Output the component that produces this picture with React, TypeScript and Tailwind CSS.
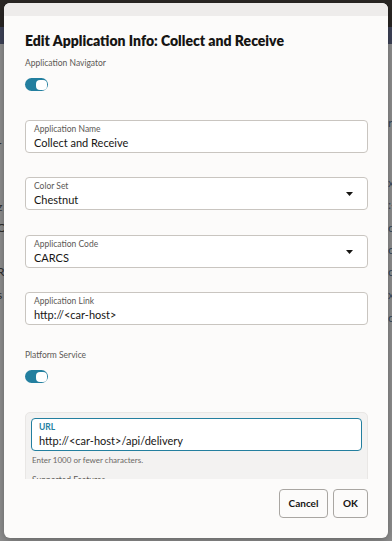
import React from "react";

const FONT = { fontFamily: "Lato, 'Noto Sans', sans-serif" };

function Toggle() {
  return (
    <div className="w-[23px] h-[13px] rounded-full bg-[#237f9f] flex items-center justify-end pr-[1.5px]">
      <div className="w-[11px] h-[10px] rounded-[4px] bg-white" />
    </div>
  );
}

function Caret() {
  return (
    <svg width="7" height="4" viewBox="0 0 7 4" className="shrink-0">
      <path d="M0 0 H7 L3.5 4 Z" fill="#161513" />
    </svg>
  );
}

function Field({ label, value, select }: { label: string; value: string; select?: boolean }) {
  return (
    <div className="h-[33px] rounded-[4px] border border-[#c9c5c0] bg-white flex items-center pl-[8px] pr-[14px]">
      <div className="flex-1 flex flex-col">
        <div className="text-[8.5px] leading-[12px] text-[#5b5855]">{label}</div>
        <div className="text-[11px] leading-[15px] text-[#161513]">{value}</div>
      </div>
      {select && <Caret />}
    </div>
  );
}

const leftChars: [number, string][] = [
  [90, ":"], [145, "r"], [166, "l"], [207, "z"], [228, "O"], [250, "l"], [272, "R"], [295, "s"], [348, "l"],
];
const rightChars: [number, string][] = [
  [123, "r"], [183, "x"], [205, ":-"], [228, "c"], [250, "c"], [272, "c"], [295, "x"], [318, "c"],
];

export default function App() {
  return (
    <div className="relative w-[392px] h-[541px] overflow-hidden bg-[#8e8e8e]" style={FONT}>
      {/* background page */}
      <div className="h-[27px] bg-[#2a2725]" />
      <div className="h-[17px] bg-[#3e4358]" />
      <div className="relative">
        {leftChars.map(([y, c]) => (
          <span key={"l" + y} className="absolute left-[-3px] text-[12px] leading-[14px] text-[#2f2f2f]" style={{ top: y - 51 }}>
            {c}
          </span>
        ))}
        {rightChars.map(([y, c]) => (
          <span key={"r" + y} className="absolute left-[388px] text-[12px] leading-[14px] text-[#34495e]" style={{ top: y - 51 }}>
            {c}
          </span>
        ))}
      </div>

      {/* modal */}
      <div className="absolute left-[4px] top-[3px] w-[384px] h-[535px] rounded-[6px] bg-[#fcfbfa] shadow-[0_2px_8px_rgba(0,0,0,0.3)] flex flex-col overflow-hidden">
        <div className="h-[13px] bg-[#eeeceb] shrink-0" />
        <div className="pl-[21px] pr-[20px] pt-[15px] shrink-0">
          <div className="text-[14px] leading-[20px] font-extrabold text-[#161513]">
            Edit Application Info: Collect and Receive
          </div>
        </div>
        <div className="h-[428px] overflow-hidden pl-[21px] pr-[20px] shrink-0">
          <div className="mt-[5px] text-[8.5px] leading-[14px] text-[#5b5855]">Application Navigator</div>
          <div className="mt-[8px]">
            <Toggle />
          </div>
          <div className="mt-[29px]">
            <Field label="Application Name" value="Collect and Receive" />
          </div>
          <div className="mt-[24px]">
            <Field label="Color Set" value="Chestnut" select />
          </div>
          <div className="mt-[25px]">
            <Field label="Application Code" value="CARCS" select />
          </div>
          <div className="mt-[24px]">
            <Field label="Application Link" value="http://<car-host>" />
          </div>
          <div className="mt-[23px] text-[8.5px] leading-[14px] text-[#5b5855]">Platform Service</div>
          <div className="mt-[8px]">
            <Toggle />
          </div>
          <div className="mt-[29px] rounded-t-[5px] border border-[#e9e7e5] bg-[#f3f2f1] px-[5px] pt-[5px] pb-[10px]">
            <div className="h-[33px] rounded-[4px] border-[1.5px] border-[#237f9f] bg-white flex flex-col justify-center pl-[7px]">
              <div className="text-[8.5px] leading-[12px] text-[#237f9f] font-bold">URL</div>
              <div className="text-[11px] leading-[15px] text-[#161513]">http://&lt;car-host&gt;/api/delivery</div>
            </div>
            <div className="mt-[2px] pl-[1px] text-[8px] leading-[14px] text-[#6b6864]">Enter 1000 or fewer characters.</div>
            <div className="mt-[6px] pl-[1px] text-[8.5px] leading-[14px] text-[#5b5855]">Supported Features</div>
          </div>
        </div>
        <div className="flex justify-end gap-[5px] pl-[21px] pr-[20px] pt-[10px]">
          <button className="h-[29px] w-[49px] rounded-[4px] border border-[#a9a6a2] bg-[#fcfbfa] text-[10px] font-bold text-[#161513]">
            Cancel
          </button>
          <button className="h-[29px] w-[35px] rounded-[4px] border border-[#a9a6a2] bg-[#fcfbfa] text-[10px] font-bold text-[#161513]">
            OK
          </button>
        </div>
      </div>
    </div>
  );
}
